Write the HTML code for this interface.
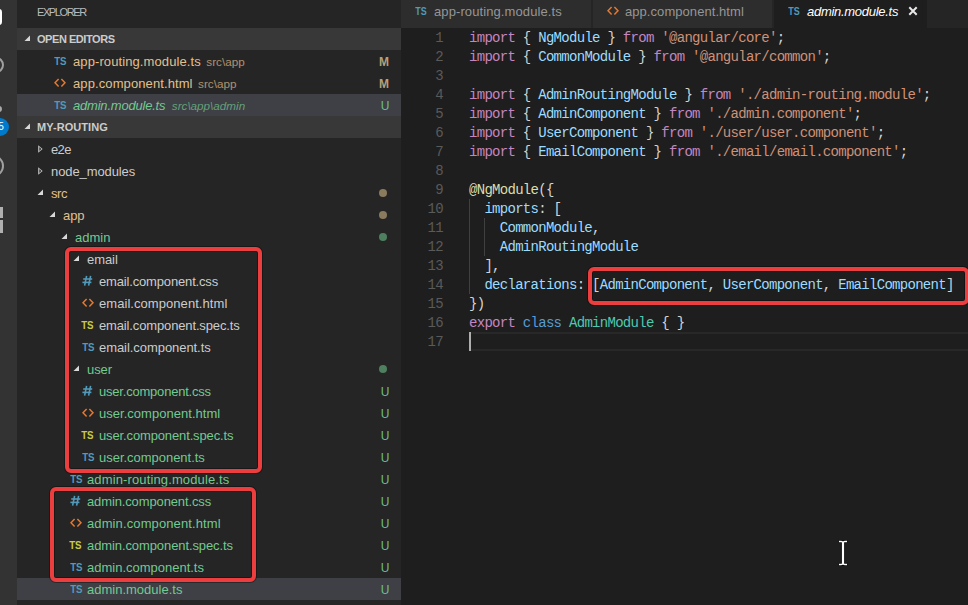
<!DOCTYPE html>
<html><head><meta charset="utf-8"><style>
*{margin:0;padding:0;box-sizing:border-box}
html,body{width:968px;height:605px;overflow:hidden;background:#1e1e1e;font-family:"Liberation Sans",sans-serif}
#ab{position:absolute;left:0;top:0;width:17px;height:605px;background:#333333;overflow:hidden}
#sb{position:absolute;left:17px;top:0;width:384px;height:605px;background:#252526;overflow:hidden}
#sb .ic, #tabs .ic{position:absolute}
#sb > svg.ic{margin-left:-17px}
.ttl{position:absolute;left:20px;top:0;height:28px;line-height:25px;font-size:11px;color:#bbbbbb;letter-spacing:-1.4px}
.hdr{position:absolute;left:0;width:384px;height:22px;background:#383838}
.ht{position:absolute;left:20px;height:22px;line-height:22px;font-size:11px;font-weight:bold;color:#cccccc;letter-spacing:-0.35px}
.sel{position:absolute;left:0;width:384px;height:22px;background:#3f3f46}
.row{position:absolute;height:22px;line-height:22px;font-size:13px;white-space:nowrap;margin-left:-17px;letter-spacing:-0.1px}
.row.it{font-style:italic;letter-spacing:-0.17px}
.row.it .desc{margin-left:6.5px;letter-spacing:0}
.desc{font-size:11.7px;opacity:0.7;margin-left:5.5px;letter-spacing:0}
.badge{position:absolute;left:362px;width:12px;height:22px;line-height:24px;font-size:12px;text-align:center}
.bm{color:#b89f78;font-weight:bold;margin-left:-1px}
.bu{color:#6dbf8b}
.dot{position:absolute;left:362px;width:8px;height:8px;border-radius:50%}
.rbox{position:absolute;border:4px solid #ec3e3e;border-radius:6px;box-shadow:0 0 0 1px rgba(0,0,0,0.35), inset 0 0 0 1px rgba(0,0,0,0.35)}
#sb .rbox{margin-left:-17px}
#ed{position:absolute;left:401px;top:0;width:567px;height:605px;background:#1e1e1e;overflow:hidden}
#tabs{position:absolute;left:0;top:0;width:567px;height:28px;background:#252526}
.tab{position:absolute;top:0;height:28px;background:#2d2d2d;border-right:1px solid #252526}
.tab.act{background:#1e1e1e;border-right:none}
.tt{position:absolute;left:33px;top:0;line-height:24px;font-size:13px;color:#969696;white-space:nowrap}
.tab.act .tt{color:#ffffff;font-style:italic}
#code{position:absolute;left:0;top:28px;width:567px;height:577px;font-family:"Liberation Mono",monospace;font-size:14px;letter-spacing:-0.71px}
.ln{position:absolute;left:0;width:42px;text-align:right;height:19px;line-height:21px;color:#5a5a5a}
.cl{position:absolute;left:68px;height:19px;line-height:20px;white-space:pre}
.cur{position:absolute;left:68px;width:500px;height:19px;border:2px solid #282828;border-right:none;border-left:none}
.guide{position:absolute;width:1px;background:#404040}
</style></head>
<body>
<div id="sb">
<div class="ttl">EXPLORER</div>
<div class="hdr" style="top:28px"></div>
<svg class="ic" style="left:24px;top:35px" width="7" height="7" viewBox="0 0 7 7"><polygon points="6,0.5 6,6 0.5,6" fill="#d8d8d8"/></svg>
<div class="ht" style="top:28px;letter-spacing:-0.45px">OPEN EDITORS</div>
<svg class="ic" style="left:54px;top:56px" width="15" height="10" viewBox="0 0 15 10"><text x="0.2" y="8.8" textLength="12.4" lengthAdjust="spacingAndGlyphs" fill="#519aba" font-family="Liberation Sans" font-weight="bold" font-size="11.4">TS</text></svg>
<div class="row" style="top:51px;left:73px;color:#e2c08d;letter-spacing:0.100px;">app-routing.module.ts<span class="desc">src\app</span></div>
<div class="badge bm" style="top:50px">M</div>
<svg class="ic" style="left:54px;top:78px" width="12" height="11" viewBox="0 0 12 11"><polyline points="4.6,1 1,4.8 4.6,8.6" fill="none" stroke="#e37933" stroke-width="1.5"/><polyline points="7.4,1 11,4.8 7.4,8.6" fill="none" stroke="#e37933" stroke-width="1.5"/></svg>
<div class="row" style="top:73px;left:73px;color:#e2c08d;letter-spacing:0.100px;">app.component.html<span class="desc">src\app</span></div>
<div class="badge bm" style="top:72px">M</div>
<div class="sel" style="top:94px"></div>
<svg class="ic" style="left:54px;top:100px" width="15" height="10" viewBox="0 0 15 10"><text x="0.2" y="8.8" textLength="12.4" lengthAdjust="spacingAndGlyphs" fill="#519aba" font-family="Liberation Sans" font-weight="bold" font-size="11.4">TS</text></svg>
<div class="row it" style="top:95px;left:73px;color:#73c991;letter-spacing:-0.206px;">admin.module.ts<span class="desc">src\app\admin</span></div>
<div class="badge bu" style="top:94px">U</div>
<div class="hdr" style="top:116px"></div>
<svg class="ic" style="left:24px;top:123px" width="7" height="7" viewBox="0 0 7 7"><polygon points="6,0.5 6,6 0.5,6" fill="#d8d8d8"/></svg>
<div class="ht" style="top:116px;letter-spacing:0.05px">MY-ROUTING</div>
<svg class="ic" style="left:37px;top:144px" width="6" height="10" viewBox="0 0 6 10"><polygon points="1.2,1.3 5.6,5 1.2,8.7" fill="#c5c5c5"/><polygon points="2.4,3.1 4.2,5 2.4,6.9" fill="#252526"/></svg>
<div class="row" style="top:139px;left:51px;color:#cccccc;letter-spacing:-0.650px;">e2e</div>
<svg class="ic" style="left:37px;top:166px" width="6" height="10" viewBox="0 0 6 10"><polygon points="1.2,1.3 5.6,5 1.2,8.7" fill="#c5c5c5"/><polygon points="2.4,3.1 4.2,5 2.4,6.9" fill="#252526"/></svg>
<div class="row" style="top:161px;left:51px;color:#cccccc;letter-spacing:-0.100px;">node_modules</div>
<svg class="ic" style="left:37px;top:189px" width="7" height="7" viewBox="0 0 7 7"><polygon points="6,0.5 6,6 0.5,6" fill="#d8d8d8"/></svg>
<div class="row" style="top:183px;left:51px;color:#e2c08d;letter-spacing:-0.450px;">src</div>
<div class="dot" style="top:189px;background:#8a7a5e"></div>
<svg class="ic" style="left:49px;top:211px" width="7" height="7" viewBox="0 0 7 7"><polygon points="6,0.5 6,6 0.5,6" fill="#d8d8d8"/></svg>
<div class="row" style="top:205px;left:63px;color:#e2c08d;letter-spacing:-0.100px;">app</div>
<div class="dot" style="top:211px;background:#8a7a5e"></div>
<svg class="ic" style="left:61px;top:233px" width="7" height="7" viewBox="0 0 7 7"><polygon points="6,0.5 6,6 0.5,6" fill="#d8d8d8"/></svg>
<div class="row" style="top:227px;left:75px;color:#73c991;letter-spacing:0.025px;">admin</div>
<div class="dot" style="top:233px;background:#4e7f5f"></div>
<svg class="ic" style="left:73px;top:255px" width="7" height="7" viewBox="0 0 7 7"><polygon points="6,0.5 6,6 0.5,6" fill="#d8d8d8"/></svg>
<div class="row" style="top:249px;left:87px;color:#cccccc;letter-spacing:-0.075px;">email</div>
<svg class="ic" style="left:82px;top:275px" width="11" height="12" viewBox="0 0 11 12"><g stroke="#519aba" stroke-width="1.6" fill="none"><line x1="4.6" y1="0.8" x2="2.6" y2="10.6"/><line x1="8.6" y1="0.8" x2="6.6" y2="10.6"/><line x1="1.2" y1="4" x2="10.2" y2="4"/><line x1="0.4" y1="7.4" x2="9.4" y2="7.4"/></g></svg>
<div class="row" style="top:271px;left:99px;color:#cccccc;letter-spacing:-0.161px;">email.component.css</div>
<svg class="ic" style="left:82px;top:298px" width="12" height="11" viewBox="0 0 12 11"><polyline points="4.6,1 1,4.8 4.6,8.6" fill="none" stroke="#e37933" stroke-width="1.5"/><polyline points="7.4,1 11,4.8 7.4,8.6" fill="none" stroke="#e37933" stroke-width="1.5"/></svg>
<div class="row" style="top:293px;left:99px;color:#cccccc;letter-spacing:0.058px;">email.component.html</div>
<svg class="ic" style="left:81px;top:320px" width="15" height="10" viewBox="0 0 15 10"><text x="0.2" y="8.8" textLength="12.4" lengthAdjust="spacingAndGlyphs" fill="#cbcb41" font-family="Liberation Sans" font-weight="bold" font-size="11.4">TS</text></svg>
<div class="row" style="top:315px;left:99px;color:#cccccc;letter-spacing:-0.141px;">email.component.spec.ts</div>
<svg class="ic" style="left:82px;top:342px" width="15" height="10" viewBox="0 0 15 10"><text x="0.2" y="8.8" textLength="12.4" lengthAdjust="spacingAndGlyphs" fill="#519aba" font-family="Liberation Sans" font-weight="bold" font-size="11.4">TS</text></svg>
<div class="row" style="top:337px;left:99px;color:#cccccc;letter-spacing:-0.059px;">email.component.ts</div>
<svg class="ic" style="left:73px;top:365px" width="7" height="7" viewBox="0 0 7 7"><polygon points="6,0.5 6,6 0.5,6" fill="#d8d8d8"/></svg>
<div class="row" style="top:359px;left:87px;color:#73c991;letter-spacing:-0.100px;">user</div>
<div class="dot" style="top:365px;background:#4e7f5f"></div>
<svg class="ic" style="left:82px;top:385px" width="11" height="12" viewBox="0 0 11 12"><g stroke="#519aba" stroke-width="1.6" fill="none"><line x1="4.6" y1="0.8" x2="2.6" y2="10.6"/><line x1="8.6" y1="0.8" x2="6.6" y2="10.6"/><line x1="1.2" y1="4" x2="10.2" y2="4"/><line x1="0.4" y1="7.4" x2="9.4" y2="7.4"/></g></svg>
<div class="row" style="top:381px;left:99px;color:#73c991;letter-spacing:-0.206px;">user.component.css</div>
<div class="badge bu" style="top:380px">U</div>
<svg class="ic" style="left:82px;top:408px" width="12" height="11" viewBox="0 0 12 11"><polyline points="4.6,1 1,4.8 4.6,8.6" fill="none" stroke="#e37933" stroke-width="1.5"/><polyline points="7.4,1 11,4.8 7.4,8.6" fill="none" stroke="#e37933" stroke-width="1.5"/></svg>
<div class="row" style="top:403px;left:99px;color:#73c991;letter-spacing:0.028px;">user.component.html</div>
<div class="badge bu" style="top:402px">U</div>
<svg class="ic" style="left:81px;top:430px" width="15" height="10" viewBox="0 0 15 10"><text x="0.2" y="8.8" textLength="12.4" lengthAdjust="spacingAndGlyphs" fill="#cbcb41" font-family="Liberation Sans" font-weight="bold" font-size="11.4">TS</text></svg>
<div class="row" style="top:425px;left:99px;color:#73c991;letter-spacing:-0.133px;">user.component.spec.ts</div>
<div class="badge bu" style="top:424px">U</div>
<svg class="ic" style="left:82px;top:452px" width="15" height="10" viewBox="0 0 15 10"><text x="0.2" y="8.8" textLength="12.4" lengthAdjust="spacingAndGlyphs" fill="#519aba" font-family="Liberation Sans" font-weight="bold" font-size="11.4">TS</text></svg>
<div class="row" style="top:447px;left:99px;color:#73c991;letter-spacing:-0.025px;">user.component.ts</div>
<div class="badge bu" style="top:446px">U</div>
<svg class="ic" style="left:70px;top:474px" width="15" height="10" viewBox="0 0 15 10"><text x="0.2" y="8.8" textLength="12.4" lengthAdjust="spacingAndGlyphs" fill="#519aba" font-family="Liberation Sans" font-weight="bold" font-size="11.4">TS</text></svg>
<div class="row" style="top:469px;left:87px;color:#73c991;letter-spacing:0.127px;">admin-routing.module.ts</div>
<div class="badge bu" style="top:468px">U</div>
<svg class="ic" style="left:70px;top:495px" width="11" height="12" viewBox="0 0 11 12"><g stroke="#519aba" stroke-width="1.6" fill="none"><line x1="4.6" y1="0.8" x2="2.6" y2="10.6"/><line x1="8.6" y1="0.8" x2="6.6" y2="10.6"/><line x1="1.2" y1="4" x2="10.2" y2="4"/><line x1="0.4" y1="7.4" x2="9.4" y2="7.4"/></g></svg>
<div class="row" style="top:491px;left:87px;color:#73c991;letter-spacing:-0.128px;">admin.component.css</div>
<div class="badge bu" style="top:490px">U</div>
<svg class="ic" style="left:70px;top:518px" width="12" height="11" viewBox="0 0 12 11"><polyline points="4.6,1 1,4.8 4.6,8.6" fill="none" stroke="#e37933" stroke-width="1.5"/><polyline points="7.4,1 11,4.8 7.4,8.6" fill="none" stroke="#e37933" stroke-width="1.5"/></svg>
<div class="row" style="top:513px;left:87px;color:#73c991;letter-spacing:0.111px;">admin.component.html</div>
<div class="badge bu" style="top:512px">U</div>
<svg class="ic" style="left:69px;top:540px" width="15" height="10" viewBox="0 0 15 10"><text x="0.2" y="8.8" textLength="12.4" lengthAdjust="spacingAndGlyphs" fill="#cbcb41" font-family="Liberation Sans" font-weight="bold" font-size="11.4">TS</text></svg>
<div class="row" style="top:535px;left:87px;color:#73c991;letter-spacing:-0.095px;">admin.component.spec.ts</div>
<div class="badge bu" style="top:534px">U</div>
<svg class="ic" style="left:70px;top:562px" width="15" height="10" viewBox="0 0 15 10"><text x="0.2" y="8.8" textLength="12.4" lengthAdjust="spacingAndGlyphs" fill="#519aba" font-family="Liberation Sans" font-weight="bold" font-size="11.4">TS</text></svg>
<div class="row" style="top:557px;left:87px;color:#73c991;letter-spacing:-0.006px;">admin.component.ts</div>
<div class="badge bu" style="top:556px">U</div>
<div class="sel" style="top:578px"></div>
<svg class="ic" style="left:70px;top:584px" width="15" height="10" viewBox="0 0 15 10"><text x="0.2" y="8.8" textLength="12.4" lengthAdjust="spacingAndGlyphs" fill="#519aba" font-family="Liberation Sans" font-weight="bold" font-size="11.4">TS</text></svg>
<div class="row" style="top:579px;left:87px;color:#73c991;letter-spacing:0.000px;">admin.module.ts</div>
<div class="badge bu" style="top:578px">U</div>
<div class="rbox" style="left:65px;top:247px;width:197px;height:226px"></div>
<div class="rbox" style="left:50px;top:487px;width:206px;height:95px"></div>
</div>
<div id="ab">
<div style="position:absolute;left:-14px;top:9px;width:16px;height:16px;background:#fff;border-radius:3px"></div>
<div style="position:absolute;left:-12px;top:57px;width:16px;height:16px;border:2px solid #a0a0a0;border-radius:50%"></div>
<div style="position:absolute;left:-4px;top:106px;width:6px;height:6px;background:#a8a8a8;border-radius:50%"></div>
<div style="position:absolute;left:-9px;top:118px;width:18px;height:18px;background:#007acc;border-radius:50%"></div>
<div style="position:absolute;left:-4px;top:118px;width:10px;height:18px;color:#fff;font:10px/18px 'Liberation Sans',sans-serif;text-align:center">5</div>
<div style="position:absolute;left:-18px;top:155px;width:22px;height:22px;border:2px solid #a0a0a0;border-radius:50%"></div>
<div style="position:absolute;left:-6px;top:207px;width:9px;height:11px;background:#b0b0b0"></div>
<div style="position:absolute;left:-6px;top:220px;width:9px;height:13px;background:#b0b0b0"></div>
</div>
<div id="ed">
<div id="tabs">
<div class="tab" style="left:0px;width:191px">
<svg class="ic" style="left:14px;top:6px" width="14" height="10" viewBox="0 0 14 10"><text x="0.2" y="8.8" textLength="11.4" lengthAdjust="spacingAndGlyphs" fill="#519aba" font-family="Liberation Sans" font-weight="bold" font-size="11.4">TS</text></svg>
<div class="tt" style="letter-spacing:0.100px;">app-routing.module.ts</div>
</div>
<div class="tab" style="left:192px;width:180px">
<svg class="ic" style="left:14px;top:6px" width="12" height="11" viewBox="0 0 12 11"><polyline points="4.6,1 1,4.8 4.6,8.6" fill="none" stroke="#e37933" stroke-width="1.5"/><polyline points="7.4,1 11,4.8 7.4,8.6" fill="none" stroke="#e37933" stroke-width="1.5"/></svg>
<div class="tt" style="letter-spacing:0.059px;left:32px;">app.component.html</div>
</div>
<div class="tab act" style="left:373px;width:153px">
<svg class="ic" style="left:14px;top:6px" width="14" height="10" viewBox="0 0 14 10"><text x="0.2" y="8.8" textLength="11.4" lengthAdjust="spacingAndGlyphs" fill="#519aba" font-family="Liberation Sans" font-weight="bold" font-size="11.4">TS</text></svg>
<div class="tt" style="letter-spacing:-0.286px;">admin.module.ts</div>
<svg class="ic" style="left:134px;top:6px" width="10" height="10" viewBox="0 0 10 10"><path d="M1.3,1.3 L8.7,8.7 M8.7,1.3 L1.3,8.7" stroke="#e8e8e8" stroke-width="2"/></svg>
</div>
</div>
<div id="code">
<div class="cur" style="top:304px"></div>
<div class="guide" style="left:68px;top:171px;height:95px"></div>
<div class="guide" style="left:83px;top:190px;height:38px"></div>
<div class="ln" style="top:0px">1</div>
<div class="cl" style="top:0px"><span style="color:#c586c0">import</span><span style="color:#d4d4d4"> { </span><span style="color:#9cdcfe">NgModule</span><span style="color:#d4d4d4"> } </span><span style="color:#c586c0">from</span><span style="color:#d4d4d4"> </span><span style="color:#ce9178">&#x27;@angular/core&#x27;</span><span style="color:#d4d4d4">;</span></div>
<div class="ln" style="top:19px">2</div>
<div class="cl" style="top:19px"><span style="color:#c586c0">import</span><span style="color:#d4d4d4"> { </span><span style="color:#9cdcfe">CommonModule</span><span style="color:#d4d4d4"> } </span><span style="color:#c586c0">from</span><span style="color:#d4d4d4"> </span><span style="color:#ce9178">&#x27;@angular/common&#x27;</span><span style="color:#d4d4d4">;</span></div>
<div class="ln" style="top:38px">3</div>
<div class="cl" style="top:38px"></div>
<div class="ln" style="top:57px">4</div>
<div class="cl" style="top:57px"><span style="color:#c586c0">import</span><span style="color:#d4d4d4"> { </span><span style="color:#9cdcfe">AdminRoutingModule</span><span style="color:#d4d4d4"> } </span><span style="color:#c586c0">from</span><span style="color:#d4d4d4"> </span><span style="color:#ce9178">&#x27;./admin-routing.module&#x27;</span><span style="color:#d4d4d4">;</span></div>
<div class="ln" style="top:76px">5</div>
<div class="cl" style="top:76px"><span style="color:#c586c0">import</span><span style="color:#d4d4d4"> { </span><span style="color:#9cdcfe">AdminComponent</span><span style="color:#d4d4d4"> } </span><span style="color:#c586c0">from</span><span style="color:#d4d4d4"> </span><span style="color:#ce9178">&#x27;./admin.component&#x27;</span><span style="color:#d4d4d4">;</span></div>
<div class="ln" style="top:95px">6</div>
<div class="cl" style="top:95px"><span style="color:#c586c0">import</span><span style="color:#d4d4d4"> { </span><span style="color:#9cdcfe">UserComponent</span><span style="color:#d4d4d4"> } </span><span style="color:#c586c0">from</span><span style="color:#d4d4d4"> </span><span style="color:#ce9178">&#x27;./user/user.component&#x27;</span><span style="color:#d4d4d4">;</span></div>
<div class="ln" style="top:114px">7</div>
<div class="cl" style="top:114px"><span style="color:#c586c0">import</span><span style="color:#d4d4d4"> { </span><span style="color:#9cdcfe">EmailComponent</span><span style="color:#d4d4d4"> } </span><span style="color:#c586c0">from</span><span style="color:#d4d4d4"> </span><span style="color:#ce9178">&#x27;./email/email.component&#x27;</span><span style="color:#d4d4d4">;</span></div>
<div class="ln" style="top:133px">8</div>
<div class="cl" style="top:133px"></div>
<div class="ln" style="top:152px">9</div>
<div class="cl" style="top:152px"><span style="color:#dcdcaa">@NgModule</span><span style="color:#d4d4d4">({</span></div>
<div class="ln" style="top:171px">10</div>
<div class="cl" style="top:171px"><span style="color:#d4d4d4">  </span><span style="color:#9cdcfe">imports</span><span style="color:#d4d4d4">: [</span></div>
<div class="ln" style="top:190px">11</div>
<div class="cl" style="top:190px"><span style="color:#d4d4d4">    </span><span style="color:#9cdcfe">CommonModule</span><span style="color:#d4d4d4">,</span></div>
<div class="ln" style="top:209px">12</div>
<div class="cl" style="top:209px"><span style="color:#d4d4d4">    </span><span style="color:#9cdcfe">AdminRoutingModule</span></div>
<div class="ln" style="top:228px">13</div>
<div class="cl" style="top:228px"><span style="color:#d4d4d4">  ],</span></div>
<div class="ln" style="top:247px">14</div>
<div class="cl" style="top:247px"><span style="color:#d4d4d4">  </span><span style="color:#9cdcfe">declarations</span><span style="color:#d4d4d4">: [</span><span style="color:#9cdcfe">AdminComponent</span><span style="color:#d4d4d4">, </span><span style="color:#9cdcfe">UserComponent</span><span style="color:#d4d4d4">, </span><span style="color:#9cdcfe">EmailComponent</span><span style="color:#d4d4d4">]</span></div>
<div class="ln" style="top:266px">15</div>
<div class="cl" style="top:266px"><span style="color:#d4d4d4">})</span></div>
<div class="ln" style="top:285px">16</div>
<div class="cl" style="top:285px"><span style="color:#c586c0">export</span><span style="color:#d4d4d4"> </span><span style="color:#569cd6">class</span><span style="color:#d4d4d4"> </span><span style="color:#4ec9b0">AdminModule</span><span style="color:#d4d4d4"> { }</span></div>
<div class="ln" style="top:304px">17</div>
<div class="cl" style="top:304px"></div>
<div style="position:absolute;left:68px;top:304px;width:2px;height:19px;background:#aeafad"></div>
</div>
<div class="rbox" style="left:187px;top:267px;width:381px;height:38px"></div>
</div>
<svg style="position:absolute;left:834px;top:536px" width="18" height="34" viewBox="0 0 18 34"><path d="M4.8,5.5 H7 Q9,5.5 9,7.5 Q9,5.5 11,5.5 H13.2 M9,7.5 V26.5 M4.8,28.5 H7 Q9,28.5 9,26.5 Q9,28.5 11,28.5 H13.2" fill="none" stroke="#000" stroke-width="3.2" stroke-opacity="0.75"/><path d="M5,5.5 H7 Q9,5.5 9,7.5 Q9,5.5 11,5.5 H13 M5,28.5 H7 Q9,28.5 9,26.5 Q9,28.5 11,28.5 H13" fill="none" stroke="#fff" stroke-width="1.4"/><path d="M9,7 V27" fill="none" stroke="#fff" stroke-width="2.2"/></svg>
</body></html>
